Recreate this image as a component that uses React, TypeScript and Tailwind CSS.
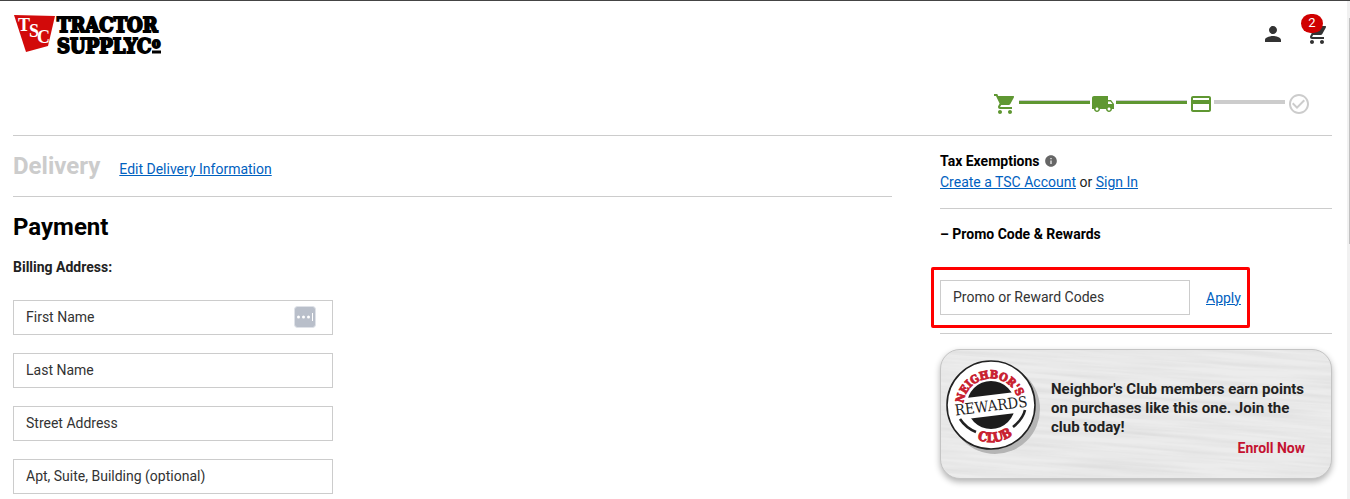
// src/pages/checkout/PaymentPage.tsx
import React from 'react';
import {
  MdCheckCircleOutline,
  MdInfo,
  MdLocalShipping,
  MdPayment,
  MdPerson,
  MdShoppingCart,
} from 'react-icons/md';

const billingFields = [
  { id: 'firstName', label: 'First Name' },
  { id: 'lastName', label: 'Last Name' },
  { id: 'street', label: 'Street Address' },
  { id: 'apt', label: 'Apt, Suite, Building (optional)' },
];

const Logo: React.FC = () => (
  <svg width="156" height="42" viewBox="0 0 156 42" aria-label="Tractor Supply Co">
    <path d="M1 2 L42 3 L35 33 L13 39 Z" fill="#d20a0a" />
    <g fontWeight="700">
      <g fill="#fff" fontSize="18" fontFamily='"Liberation Serif", serif'>
        <text x="5" y="18">T</text>
        <text x="16" y="24">S</text>
        <text x="24" y="30">C</text>
      </g>
      <g
        fill="#000"
        stroke="#000"
        strokeWidth="1.8"
        fontSize="20"
        fontFamily='"DejaVu Serif Condensed", "DejaVu Serif", serif'
      >
        <text x="44" y="19">TRACTOR</text>
        <text x="44" y="40">SUPPLY</text>
        <text x="124" y="40">C</text>
        <text x="139" y="35" fontSize="14">o</text>
      </g>
    </g>
    <path d="M139 39h9" stroke="#000" strokeWidth="3" />
  </svg>
);

const RewardsBadge: React.FC = () => (
  <svg width="96" height="96" viewBox="0 0 96 96" aria-label="Neighbor's Club Rewards">
    <defs>
      <path id="arc-top" d="M21 60 A28 28 0 1 1 71 60" />
      <path id="arc-bottom" d="M9 46 A37 37 0 0 0 83 46" />
    </defs>
    <circle cx="50" cy="50" r="45" fill="#b5b5b5" />
    <circle cx="46" cy="46" r="44" fill="#fff" stroke="#222" strokeWidth="1.6" />
    <circle cx="46" cy="46" r="24" fill="#1c1c1c" />
    <g fontFamily='"DejaVu Serif Condensed", "DejaVu Serif", serif'>
      <g transform="rotate(-7 46 46)">
        <rect x="18" y="36" width="56" height="21" fill="#fff" />
        <text x="46" y="52" fontSize="15" textAnchor="middle" fill="#222">
          REWARDS
        </text>
        <g fontWeight="700" fill="#c8202f" stroke="#c8202f" strokeWidth="0.9">
          <text fontSize="11" textAnchor="middle">
            <textPath href="#arc-top" startOffset="50%">NEIGHBOR'S</textPath>
          </text>
          <text fontSize="13" textAnchor="middle">
            <textPath href="#arc-bottom" startOffset="50%">CLUB</textPath>
          </text>
        </g>
      </g>
    </g>
    <path d="M15 60 Q21 69 31 73 M80 51 Q78 60 68 68" fill="none" stroke="#222" strokeWidth="2.600" />
  </svg>
);

const WoodGrain: React.FC = () => (
  <svg className="absolute inset-0 h-full w-full" aria-hidden="true">
    <filter id="grain" x="0" y="0" width="100%" height="100%">
      <feTurbulence type="fractalNoise" baseFrequency="0.008 0.22" numOctaves="3" seed="4" />
      <feColorMatrix values="0 0 0 0 0.5  0 0 0 0 0.5  0 0 0 0 0.5  0.5 0 0 0 -0.17" />
    </filter>
    <rect x="-10%" y="-30%" width="120%" height="160%" filter="url(#grain)" transform="rotate(4)" />
  </svg>
);

const ProgressSteps: React.FC = () => (
  <div className="flex items-center justify-end pr-[21px] text-[#5f9732]">
    <MdShoppingCart size={24} />
    <div className="mb-1 ml-0.5 mr-px h-1 w-[71px] border-t border-[#ccc] bg-[#5f9732]" />
    <MdLocalShipping size={24} />
    <div className="mb-1 ml-px mr-0.5 h-1 w-[71px] border-t border-[#ccc] bg-[#5f9732]" />
    <MdPayment size={24} />
    <div className="mb-1 ml-px mr-0.5 h-1 w-[71px] bg-[#ccc]" />
    <MdCheckCircleOutline size={24} className="text-[#ccc]" />
  </div>
);

const PaymentPage: React.FC = () => {
  return (
    <div className="flex h-screen overflow-hidden border-t border-[#444] bg-white font-['Roboto',sans-serif] text-sm text-[#222]">
      <div className="min-w-0 flex-1 pl-[13px] pr-[15px]">
        {/* Header */}
        <header className="flex h-[91px] items-start justify-between pt-3">
          <a href="#">
            <Logo />
          </a>
          <div className="flex gap-5 pr-[3px] pt-[9px] text-[#333]">
            <button aria-label="Account">
              <MdPerson size={24} />
            </button>
            <button aria-label="Cart" className="relative">
              <MdShoppingCart size={24} />
              <span className="absolute -left-1 -top-2 flex h-[19px] w-[22px] items-center justify-center rounded-full bg-[#d00000] text-[13px] text-white">
                2
              </span>
            </button>
          </div>
        </header>

        <div className="h-[44px] border-b border-[#ccc]">
          <ProgressSteps />
        </div>

        <div className="flex gap-12">
          {/* Billing form */}
          <main className="min-w-0 flex-1">
            <div className="flex h-[61px] items-baseline gap-[19px] border-b border-[#ccc] pt-[14px]">
              <h2 className="text-2xl font-bold text-[#ccc]">Delivery</h2>
              <a href="#" className="text-[#0061c0] underline">
                Edit Delivery Information
              </a>
            </div>
            <h2 className="mt-[14px] text-2xl font-bold text-black">Payment</h2>
            <h3 className="mt-[14px] font-bold">Billing Address:</h3>
            <form className="mt-[23px] flex w-80 flex-col gap-[18px]">
              {billingFields.map((field) => (
                <div key={field.id} className="relative">
                  <input
                    id={field.id}
                    aria-label={field.label}
                    placeholder={field.label}
                    className="block h-[35px] w-full border border-[#ccc] px-3 pb-0.5 text-sm placeholder:text-[#333]"
                  />
                  {field.id === 'firstName' && (
                    <svg className="absolute right-[17px] top-[6px]" width="22" height="22" viewBox="0 0 22 22">
                      <rect x="0.500" y="0.500" width="21" height="21" rx="3" fill="#b9bfca" stroke="#dfe2e8" />
                      <circle cx="4.500" cy="11" r="1.500" fill="#fff" />
                      <circle cx="9.500" cy="11" r="1.500" fill="#fff" />
                      <circle cx="14.500" cy="11" r="1.500" fill="#fff" />
                      <path d="M18.500 7v8" stroke="#fff" />
                    </svg>
                  )}
                </div>
              ))}
            </form>
          </main>

          {/* Order sidebar */}
          <aside className="w-[392px] shrink-0">
            <div className="h-[73px] border-b border-[#ccc] pt-[15px]">
              <h4 className="flex items-center gap-1 font-bold text-black">
                Tax Exemptions <MdInfo size={14} className="text-[#666]" />
              </h4>
              <p className="mt-px">
                <a href="#" className="text-[#0061c0] underline">
                  Create a TSC Account
                </a>{' '}
                or{' '}
                <a href="#" className="text-[#0061c0] underline">
                  Sign In
                </a>
              </p>
            </div>

            <div className="h-[125px] border-b border-[#ccc] pt-[15px]">
              <button className="block font-bold text-black">– Promo Code &amp; Rewards</button>
              <div className="-ml-[9px] mt-[23px] flex h-[61px] w-[319px] items-center gap-4 rounded-xs border-3 border-[#ff0000] px-1.5">
                <input
                  aria-label="Promo or Reward Codes"
                  placeholder="Promo or Reward Codes"
                  className="h-[35px] w-[250px] border border-[#ccc] px-3 pb-0.5 text-sm placeholder:text-[#333]"
                />
                <button className="text-[#0061c0] underline">Apply</button>
              </div>
            </div>

            <section className="relative mt-[15px] flex h-[130px] overflow-hidden rounded-[20px] border border-[#c4c4c4] bg-[#ececec] shadow-[0_3px_6px_rgba(0,0,0,0.3)]">
              <WoodGrain />
              <div className="relative shrink-0 pl-1 pt-[9px]">
                <RewardsBadge />
              </div>
              <div className="relative flex-1 pl-[10px] pr-[26px] pt-[30px]">
                <p className="text-[15px] font-bold leading-[19px]">
                  Neighbor's Club members earn points on purchases like this one. Join the club today!
                </p>
                <a href="#" className="mt-px block text-right font-bold text-[#c41230]">
                  Enroll Now
                </a>
              </div>
            </section>
          </aside>
        </div>
      </div>

      {/* Scroll track */}
      <div className="w-[3px] bg-[#f1f1f1] pl-0.5 pt-[17px]">
        <div className="h-[226px] bg-[#c1c1c1]" />
      </div>
    </div>
  );
};

export default PaymentPage;
